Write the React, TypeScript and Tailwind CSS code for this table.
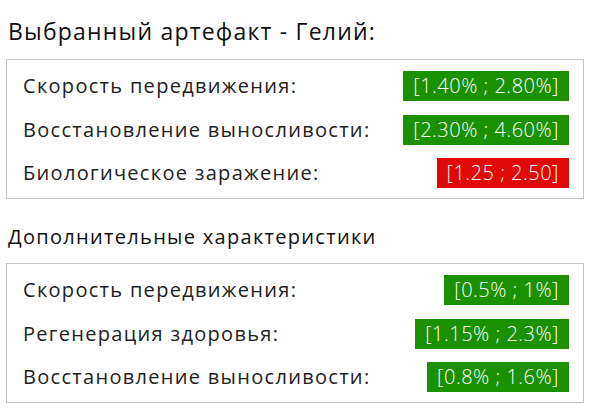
const main = [
  { label: "Скорость передвижения:", value: "[1.40% ; 2.80%]", good: true },
  { label: "Восстановление выносливости:", value: "[2.30% ; 4.60%]", good: true },
  { label: "Биологическое заражение:", value: "[1.25 ; 2.50]", good: false },
]

const extra = [
  { label: "Скорость передвижения:", value: "[0.5% ; 1%]", good: true },
  { label: "Регенерация здоровья:", value: "[1.15% ; 2.3%]", good: true },
  { label: "Восстановление выносливости:", value: "[0.8% ; 1.6%]", good: true },
]

type Stat = { label: string; value: string; good: boolean }

function StatBox({ items }: { items: Stat[] }) {
  return (
    <div className="border border-[#c4c4c4] pl-4 pr-[14px] pt-[11px] pb-[10px] flex flex-col gap-[13.5px]">
      {items.map((s, i) => (
        <div key={i} className="flex justify-between items-center h-[30px]">
          <span className="text-[20px] tracking-[1.3px] text-[#222]">{s.label}</span>
          <span
            className={
              "h-[30px] flex items-center px-[10px] text-[20px] tracking-[0.5px] font-light text-white " +
              (s.good ? "bg-[#1b9100]" : "bg-[#e00808]")
            }
          >
            {s.value}
          </span>
        </div>
      ))}
    </div>
  )
}

export default function App() {
  return (
    <div className="w-[596px] h-[412px] bg-white px-[6px] pt-[15px] font-['Open_Sans',sans-serif]">
      <div className="text-[23px] tracking-[1.2px] text-[#111] pl-[2px] leading-[32px]">Выбранный артефакт - Гелий:</div>
      <div className="w-[578px] mt-[12px]">
        <StatBox items={main} />
      </div>
      <div className="text-[20px] tracking-[1.3px] text-[#111] pl-[2px] mt-[25px] leading-[26px]">Дополнительные характеристики</div>
      <div className="w-[578px] mt-[13px]">
        <StatBox items={extra} />
      </div>
    </div>
  )
}
